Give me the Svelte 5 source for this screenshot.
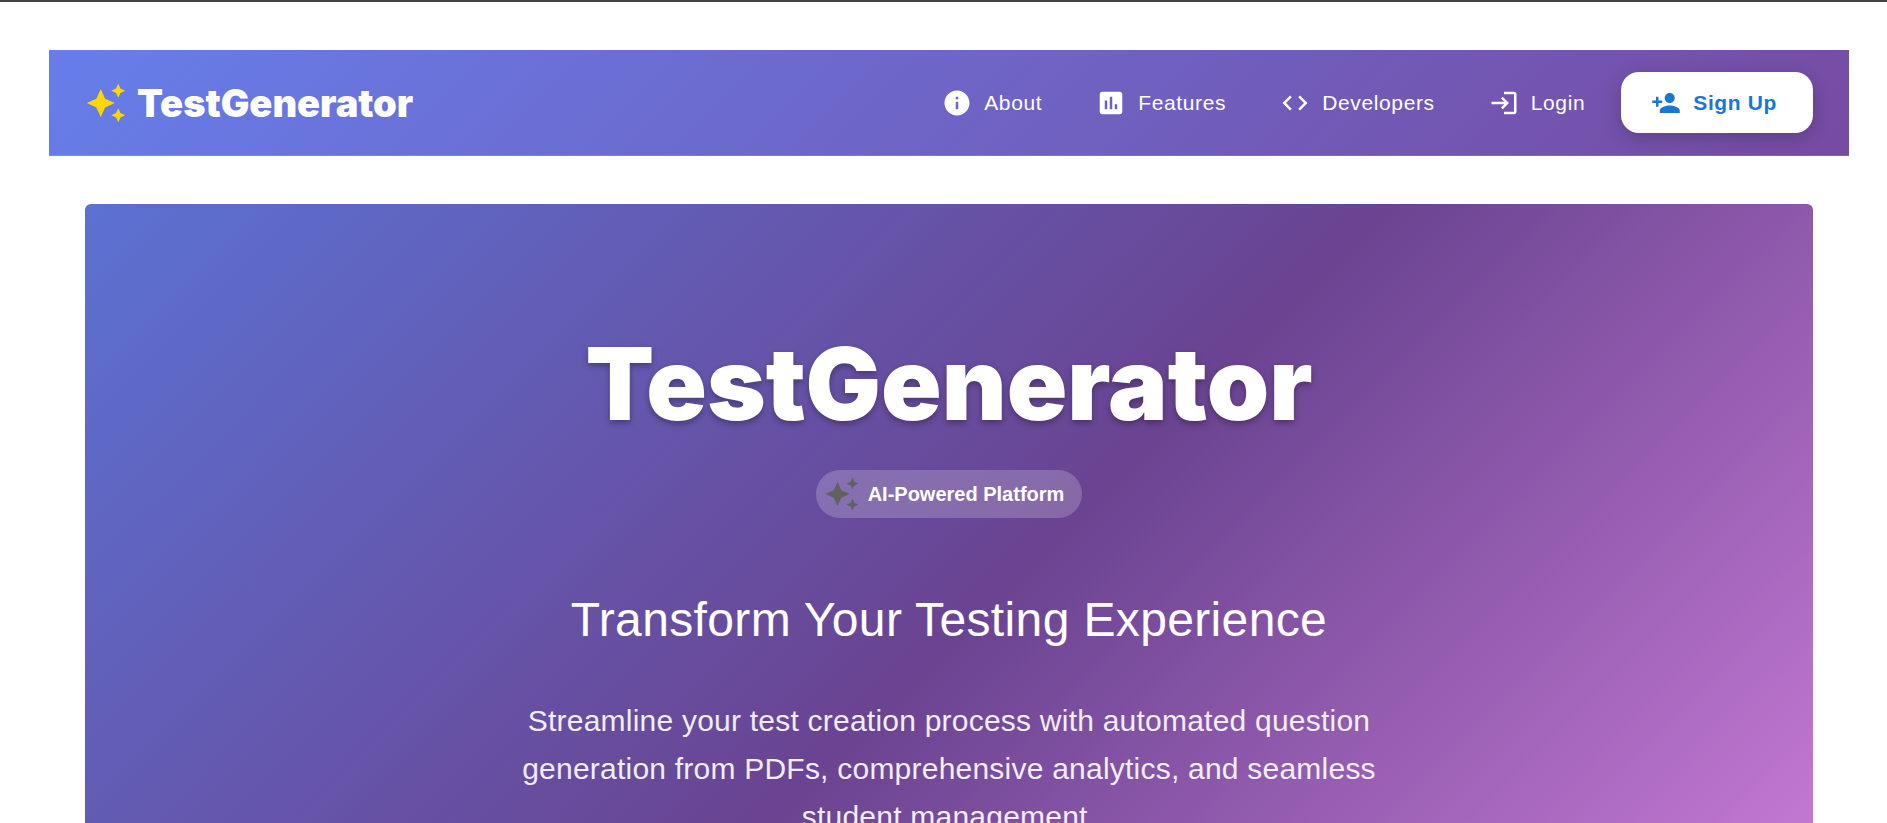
<script>
  const sparkle =
    'm19 9 1.25-2.75L23 5l-2.75-1.25L19 1l-1.25 2.75L15 5l2.75 1.25L19 9zm-7.5.5L9 4 6.5 9.5 1 12l5.5 2.5L9 20l2.5-5.5L17 12l-5.5-2.5zM19 15l-1.25 2.75L15 19l2.75 1.25L19 23l1.25-2.75L23 19l-2.75-1.25L19 15z';

  const links = [
    {
      label: 'About',
      icon: 'M12 2C6.48 2 2 6.48 2 12s4.48 10 10 10 10-4.48 10-10S17.52 2 12 2zm1 15h-2v-6h2v6zm0-8h-2V7h2v2z'
    },
    {
      label: 'Features',
      icon: 'M19 3H5c-1.1 0-2 .9-2 2v14c0 1.1.9 2 2 2h14c1.1 0 2-.9 2-2V5c0-1.1-.9-2-2-2zM9 17H7v-7h2v7zm4 0h-2V7h2v10zm4 0h-2v-4h2v4z'
    },
    {
      label: 'Developers',
      icon: 'M9.4 16.6 4.8 12l4.6-4.6L8 6l-6 6 6 6 1.4-1.4zm5.2 0 4.6-4.6-4.6-4.6L16 6l6 6-6 6-1.4-1.4z'
    },
    {
      label: 'Login',
      icon: 'M11 7 9.6 8.4l2.6 2.6H2v2h10.2l-2.6 2.6L11 17l5-5-5-5zm9 12h-8v2h8c1.1 0 2-.9 2-2V5c0-1.1-.9-2-2-2h-8v2h8v14z'
    }
  ];

  const personAdd =
    'M15 12c2.21 0 4-1.79 4-4s-1.79-4-4-4-4 1.79-4 4 1.79 4 4 4zm-9-2V7H4v3H1v2h3v3h2v-3h3v-2H6zm9 4c-2.67 0-8 1.34-8 4v2h16v-2c0-2.66-5.33-4-8-4z';
</script>

{#snippet icon(path, kind)}
  <svg class="icon {kind}" viewBox="0 0 24 24" aria-hidden="true"><path d={path} /></svg>
{/snippet}

<div class="page">
  <header class="bar">
    <a class="brand" href="#top">
      {@render icon(sparkle, 'gold')}
      <span>TestGenerator</span>
    </a>
    <nav>
      {#each links as link}
        <a class="link" href="#{link.label.toLowerCase()}">
          {@render icon(link.icon, 'small')}
          <span>{link.label}</span>
        </a>
      {/each}
      <button class="signup" type="button">
        {@render icon(personAdd, 'small')}
        <span>Sign Up</span>
      </button>
    </nav>
  </header>

  <main class="hero">
    <h1>TestGenerator</h1>
    <div class="chip">
      {@render icon(sparkle, 'gray')}
      <span>AI-Powered Platform</span>
    </div>
    <h2>Transform Your Testing Experience</h2>
    <p>
      Streamline your test creation process with automated question generation from PDFs,
      comprehensive analytics, and seamless student management.
    </p>
  </main>
</div>

<style>
  :global(body) {
    background: #fff;
  }

  .page {
    box-sizing: border-box;
    height: 100vh;
    overflow: hidden;
    border-top: 2px solid #444;
    padding: 48px 38px 0 49px;
    font-family: 'Liberation Sans', Arial, sans-serif;
    color: #fff;
  }

  .icon {
    flex: none;
    fill: currentColor;
  }

  .bar {
    display: flex;
    align-items: center;
    justify-content: space-between;
    padding: 22px 36px;
    border-bottom: 1px solid rgba(255, 255, 255, 0.1);
    background: linear-gradient(135deg, #667eea 0%, #764ba2 100%);
  }

  .brand {
    display: flex;
    align-items: center;
    gap: 10px;
    color: #fff;
    text-decoration: none;
    font: 900 38px/48px Inter, 'Arial Black', sans-serif;
  }

  .gold {
    width: 42px;
    height: 42px;
    color: #ffd700;
  }

  nav {
    display: flex;
    align-items: center;
    gap: 12px;
  }

  .link,
  .signup {
    display: flex;
    align-items: center;
    gap: 12px;
    font-size: 21px;
    line-height: 37px;
    letter-spacing: 0.03em;
  }

  .link {
    padding: 12px 24px 12px 18px;
    color: #fff;
    text-decoration: none;
  }

  .signup {
    padding: 12px 36px 12px 30px;
    border: 0;
    border-radius: 18px;
    background: #fff;
    color: #1976d2;
    font-family: inherit;
    font-weight: 700;
    box-shadow: 0 5px 18px rgba(0, 0, 0, 0.2);
  }

  .small {
    width: 30px;
    height: 30px;
  }

  .hero {
    display: flex;
    flex-direction: column;
    align-items: center;
    margin: 48px 36px 0;
    padding: 122px 36px 240px;
    border-radius: 6px;
    background:
      linear-gradient(rgba(0, 0, 0, 0.1), rgba(0, 0, 0, 0.1)),
      linear-gradient(135deg, #667eea 0%, #764ba2 50%, #f093fb 100%);
    text-align: center;
  }

  h1 {
    margin: 0;
    font: 900 100px/116px Inter, 'Arial Black', sans-serif;
    text-shadow: 0 3px 6px rgba(0, 0, 0, 0.3);
  }

  .chip {
    display: flex;
    align-items: center;
    gap: 8px;
    margin-top: 28px;
    padding: 0 18px 0 8px;
    border-radius: 24px;
    background: rgba(255, 255, 255, 0.2);
    font-size: 20px;
    font-weight: 700;
    line-height: 48px;
  }

  .gray {
    width: 36px;
    height: 36px;
    color: #616161;
  }

  h2 {
    margin: 72px 0 0;
    font-size: 48px;
    font-weight: 400;
    line-height: 60px;
    letter-spacing: 0.0075em;
  }

  p {
    max-width: 900px;
    margin: 47px 0 0;
    font-size: 30px;
    line-height: 48px;
    letter-spacing: 0.0075em;
    opacity: 0.9;
  }
</style>
